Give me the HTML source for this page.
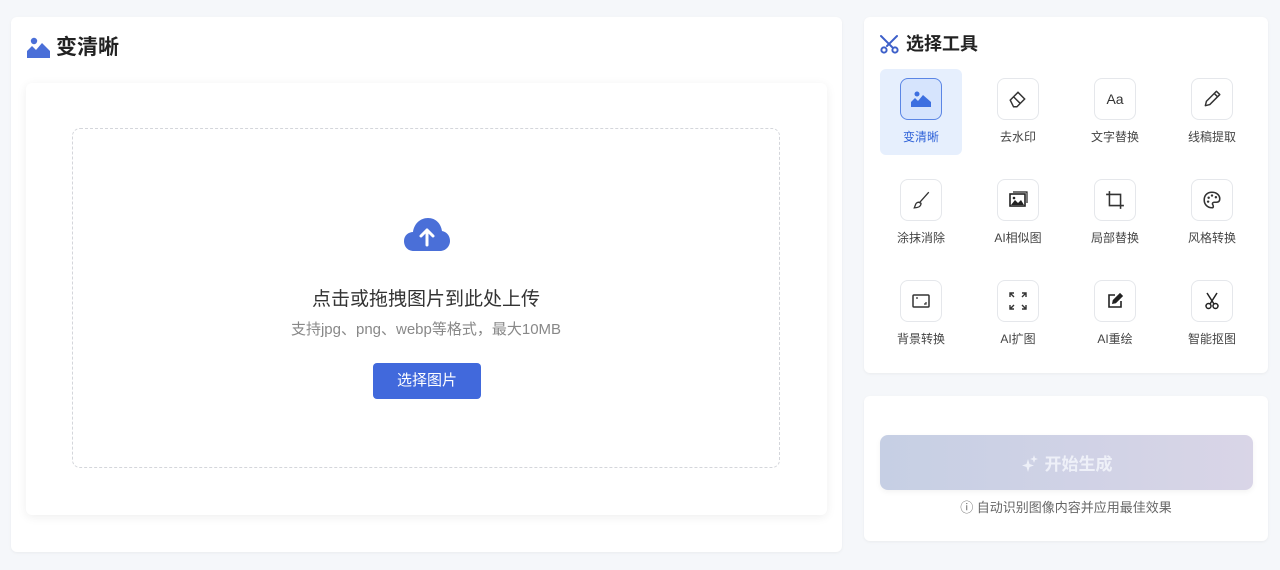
<!DOCTYPE html><html><head><meta charset="utf-8"><style>
*{margin:0;padding:0;box-sizing:border-box}
body{width:1280px;height:570px;background:#f5f7fa;font-family:"Liberation Sans","Noto Sans CJK SC",sans-serif;position:relative;overflow:hidden}
.card{position:absolute;background:#fff;border-radius:6px;box-shadow:0 1px 3px rgba(0,0,0,.05)}
.abs{position:absolute}
.tool{position:absolute;width:82px;height:86px;text-align:center}
.tool .ib{width:42px;height:42px;margin:9px auto 0;border:1px solid #e5e7eb;border-radius:8px;display:flex;align-items:center;justify-content:center;background:#fff}
.tool .lb{font-size:12px;color:#444;margin-top:9px;line-height:16px}
.sel{background:#e6effd;border-radius:6px}
.sel .ib{border-color:#5b86e5;background:#d6e4fd}
.sel .lb{color:#2f62d8}
svg{display:block}
</style></head><body>
<div class="card" style="left:11px;top:17px;width:831px;height:535px"></div>
<svg class="abs" style="left:27px;top:36px" width="23" height="22" viewBox="0 0 23 22"><circle cx="7" cy="5" r="3.2" fill="#4a6fd8"/><path d="M0 22 L0 15 L5 10 L9 14 L15 7 L23 15 L23 22Z" fill="#4a6fd8"/></svg>
<div class="abs" style="left:56px;top:34px;font-size:21px;font-weight:bold;color:#222;line-height:28px">变清晰</div>
<div class="card" style="left:26px;top:83px;width:801px;height:432px;box-shadow:0 2px 10px rgba(0,0,0,.07)"></div>
<div class="abs" style="left:72px;top:128px;width:708px;height:340px;border:1.5px dashed #d4d6db;border-radius:8px"></div>
<svg class="abs" style="left:404px;top:218px" width="46" height="33" viewBox="0 0 46 33"><path d="M10 33 C3 33 0 28 0 23 C0 17 5 14 9 14 C10 6 16 0 24 0 C32 0 37 6 38 13 C43 14 46 18 46 23 C46 28 42 33 36 33Z" fill="#4a6fd8"/><path d="M23 27 V12 M17 18 L23 12 L29 18" stroke="#fff" stroke-width="3" fill="none" stroke-linecap="round" stroke-linejoin="round"/></svg>
<div class="abs" style="left:72px;top:288px;width:708px;text-align:center;font-size:19px;color:#333;line-height:24px">点击或拖拽图片到此处上传</div>
<div class="abs" style="left:72px;top:320px;width:708px;text-align:center;font-size:15px;color:#888;line-height:20px">支持jpg、png、webp等格式，最大10MB</div>
<div class="abs" style="left:373px;top:363px;width:108px;height:36px;background:#4169dc;border-radius:4px;color:#fff;font-size:15px;text-align:center;line-height:36px">选择图片</div>

<div class="card" style="left:864px;top:17px;width:404px;height:356px"></div>
<svg class="abs" style="left:879px;top:34px" width="21" height="20" viewBox="0 0 21 20" fill="none" stroke="#3d5fc9" stroke-width="2" stroke-linecap="round"><path d="M2 2 L13 13 M18 2 L8 12"/><circle cx="5" cy="16" r="2.6"/><circle cx="16" cy="16" r="2.6"/></svg>
<div class="abs" style="left:906px;top:32px;font-size:18px;font-weight:bold;color:#222;line-height:24px">选择工具</div>

<div class="tool sel" style="left:880px;top:69px"><div class="ib"><svg width="20" height="20" viewBox="0 0 20 20"><circle cx="6" cy="5" r="2.5" fill="#3d6fe0"/><path d="M0 18 L0 13 L4 9 L7 12 L12 6 L20 13 L20 18Z" fill="#3d6fe0"/></svg></div><div class="lb">变清晰</div></div>
<div class="tool" style="left:977px;top:69px"><div class="ib"><svg width="20" height="20" viewBox="0 0 18 18" fill="none" stroke="#333" stroke-width="1.3"><path d="M2 10 L9 3 L15 9 L8 16 L5 16Z M5 7 L11 13"/></svg></div><div class="lb">去水印</div></div>
<div class="tool" style="left:1074px;top:69px"><div class="ib"><span style="font-size:14px;color:#333">Aa</span></div><div class="lb">文字替换</div></div>
<div class="tool" style="left:1171px;top:69px"><div class="ib"><svg width="20" height="20" viewBox="0 0 18 18" fill="none" stroke="#333" stroke-width="1.3" stroke-linejoin="round"><path d="M3 15 L4 11 L13 2 L16 5 L7 14Z M11 4 L14 7"/></svg></div><div class="lb">线稿提取</div></div>

<div class="tool" style="left:880px;top:170px"><div class="ib"><svg width="20" height="20" viewBox="0 0 18 18" fill="none" stroke="#333" stroke-width="1.2"><path d="M16 2 L8 11 M7 11 C4 11 4 14 3 16 C6 16 9 15 9 12Z"/></svg></div><div class="lb">涂抹消除</div></div>
<div class="tool" style="left:977px;top:170px"><div class="ib"><svg width="20" height="18" viewBox="0 0 20 18"><rect x="2" y="3" width="15" height="12" fill="none" stroke="#222" stroke-width="1.6"/><path d="M5 1 H19 V12" fill="none" stroke="#222" stroke-width="1.2"/><path d="M3 14 L7 9 L10 12 L13 9 L16 14Z" fill="#222"/><circle cx="6" cy="7" r="1.3" fill="#222"/></svg></div><div class="lb">AI相似图</div></div>
<div class="tool" style="left:1074px;top:170px"><div class="ib"><svg width="20" height="20" viewBox="0 0 18 18" fill="none" stroke="#333" stroke-width="1.4"><path d="M4 1 V14 H17 M1 4 H14 V17"/></svg></div><div class="lb">局部替换</div></div>
<div class="tool" style="left:1171px;top:170px"><div class="ib"><svg width="20" height="20" viewBox="0 0 18 18"><path d="M9 2 C4 2 2 5.5 2 9 C2 13 5 16 9 16 C10.5 16 10.5 14 9.5 13 C9 12 10 11 11 11 H13 C15 11 16 10 16 8 C16 4.5 13 2 9 2Z" fill="none" stroke="#333" stroke-width="1.4"/><circle cx="6" cy="7" r="1.1" fill="#333"/><circle cx="9" cy="5" r="1.1" fill="#333"/><circle cx="12.5" cy="6.5" r="1.1" fill="#333"/><circle cx="5.5" cy="10.5" r="1.1" fill="#333"/></svg></div><div class="lb">风格转换</div></div>

<div class="tool" style="left:880px;top:271px"><div class="ib"><svg width="20" height="16" viewBox="0 0 20 16" fill="none" stroke="#333" stroke-width="1.5"><rect x="2" y="2" width="16" height="12" rx="1"/><path d="M5 5 H7 M13 11 H15 V9" stroke-width="1.2"/></svg></div><div class="lb">背景转换</div></div>
<div class="tool" style="left:977px;top:271px"><div class="ib"><svg width="20" height="20" viewBox="0 0 20 20" fill="none" stroke="#333" stroke-width="1.4"><path d="M2 6 V2 H6 M2 2 L6 6 M14 2 H18 V6 M18 2 L14 6 M2 14 V18 H6 M2 18 L6 14 M18 14 V18 H14 M18 18 L14 14"/></svg></div><div class="lb">AI扩图</div></div>
<div class="tool" style="left:1074px;top:271px"><div class="ib"><svg width="18" height="18" viewBox="0 0 18 18" fill="none" stroke="#222" stroke-width="1.6"><path d="M9 3 H3 V15 H15 V9"/><path d="M7 11 L7.5 8.5 L14 2 L16 4 L9.5 10.5Z" fill="#222"/></svg></div><div class="lb">AI重绘</div></div>
<div class="tool" style="left:1171px;top:271px"><div class="ib"><svg width="16" height="18" viewBox="0 0 16 18" fill="none" stroke="#222" stroke-width="1.5"><path d="M3 1 L10 12 M13 1 L6 12"/><circle cx="4.5" cy="14" r="2.5"/><circle cx="11.5" cy="14" r="2.5"/></svg></div><div class="lb">智能抠图</div></div>

<div class="card" style="left:864px;top:396px;width:404px;height:145px"></div>
<div class="abs" style="left:880px;top:435px;width:373px;height:55px;border-radius:8px;background:linear-gradient(90deg,#c6cfe4,#d9d5e7);color:#eef0f8;font-size:17px;font-weight:bold;display:flex;align-items:center;justify-content:center;box-shadow:0 2px 6px rgba(0,0,0,.05)"><svg width="18" height="18" viewBox="0 0 18 18" style="margin-right:6px"><path d="M7 5 L8.5 10 L13 11.5 L8.5 13 L7 18 L5.5 13 L1 11.5 L5.5 10Z" fill="#eef0f8"/><path d="M13 1 L14 4 L17 5 L14 6 L13 9 L12 6 L9 5 L12 4Z" fill="#eef0f8"/></svg>开始生成</div>
<div class="abs" style="left:864px;top:499px;width:404px;text-align:center;font-size:13px;color:#666;line-height:18px">ⓘ 自动识别图像内容并应用最佳效果</div>
</body></html>
